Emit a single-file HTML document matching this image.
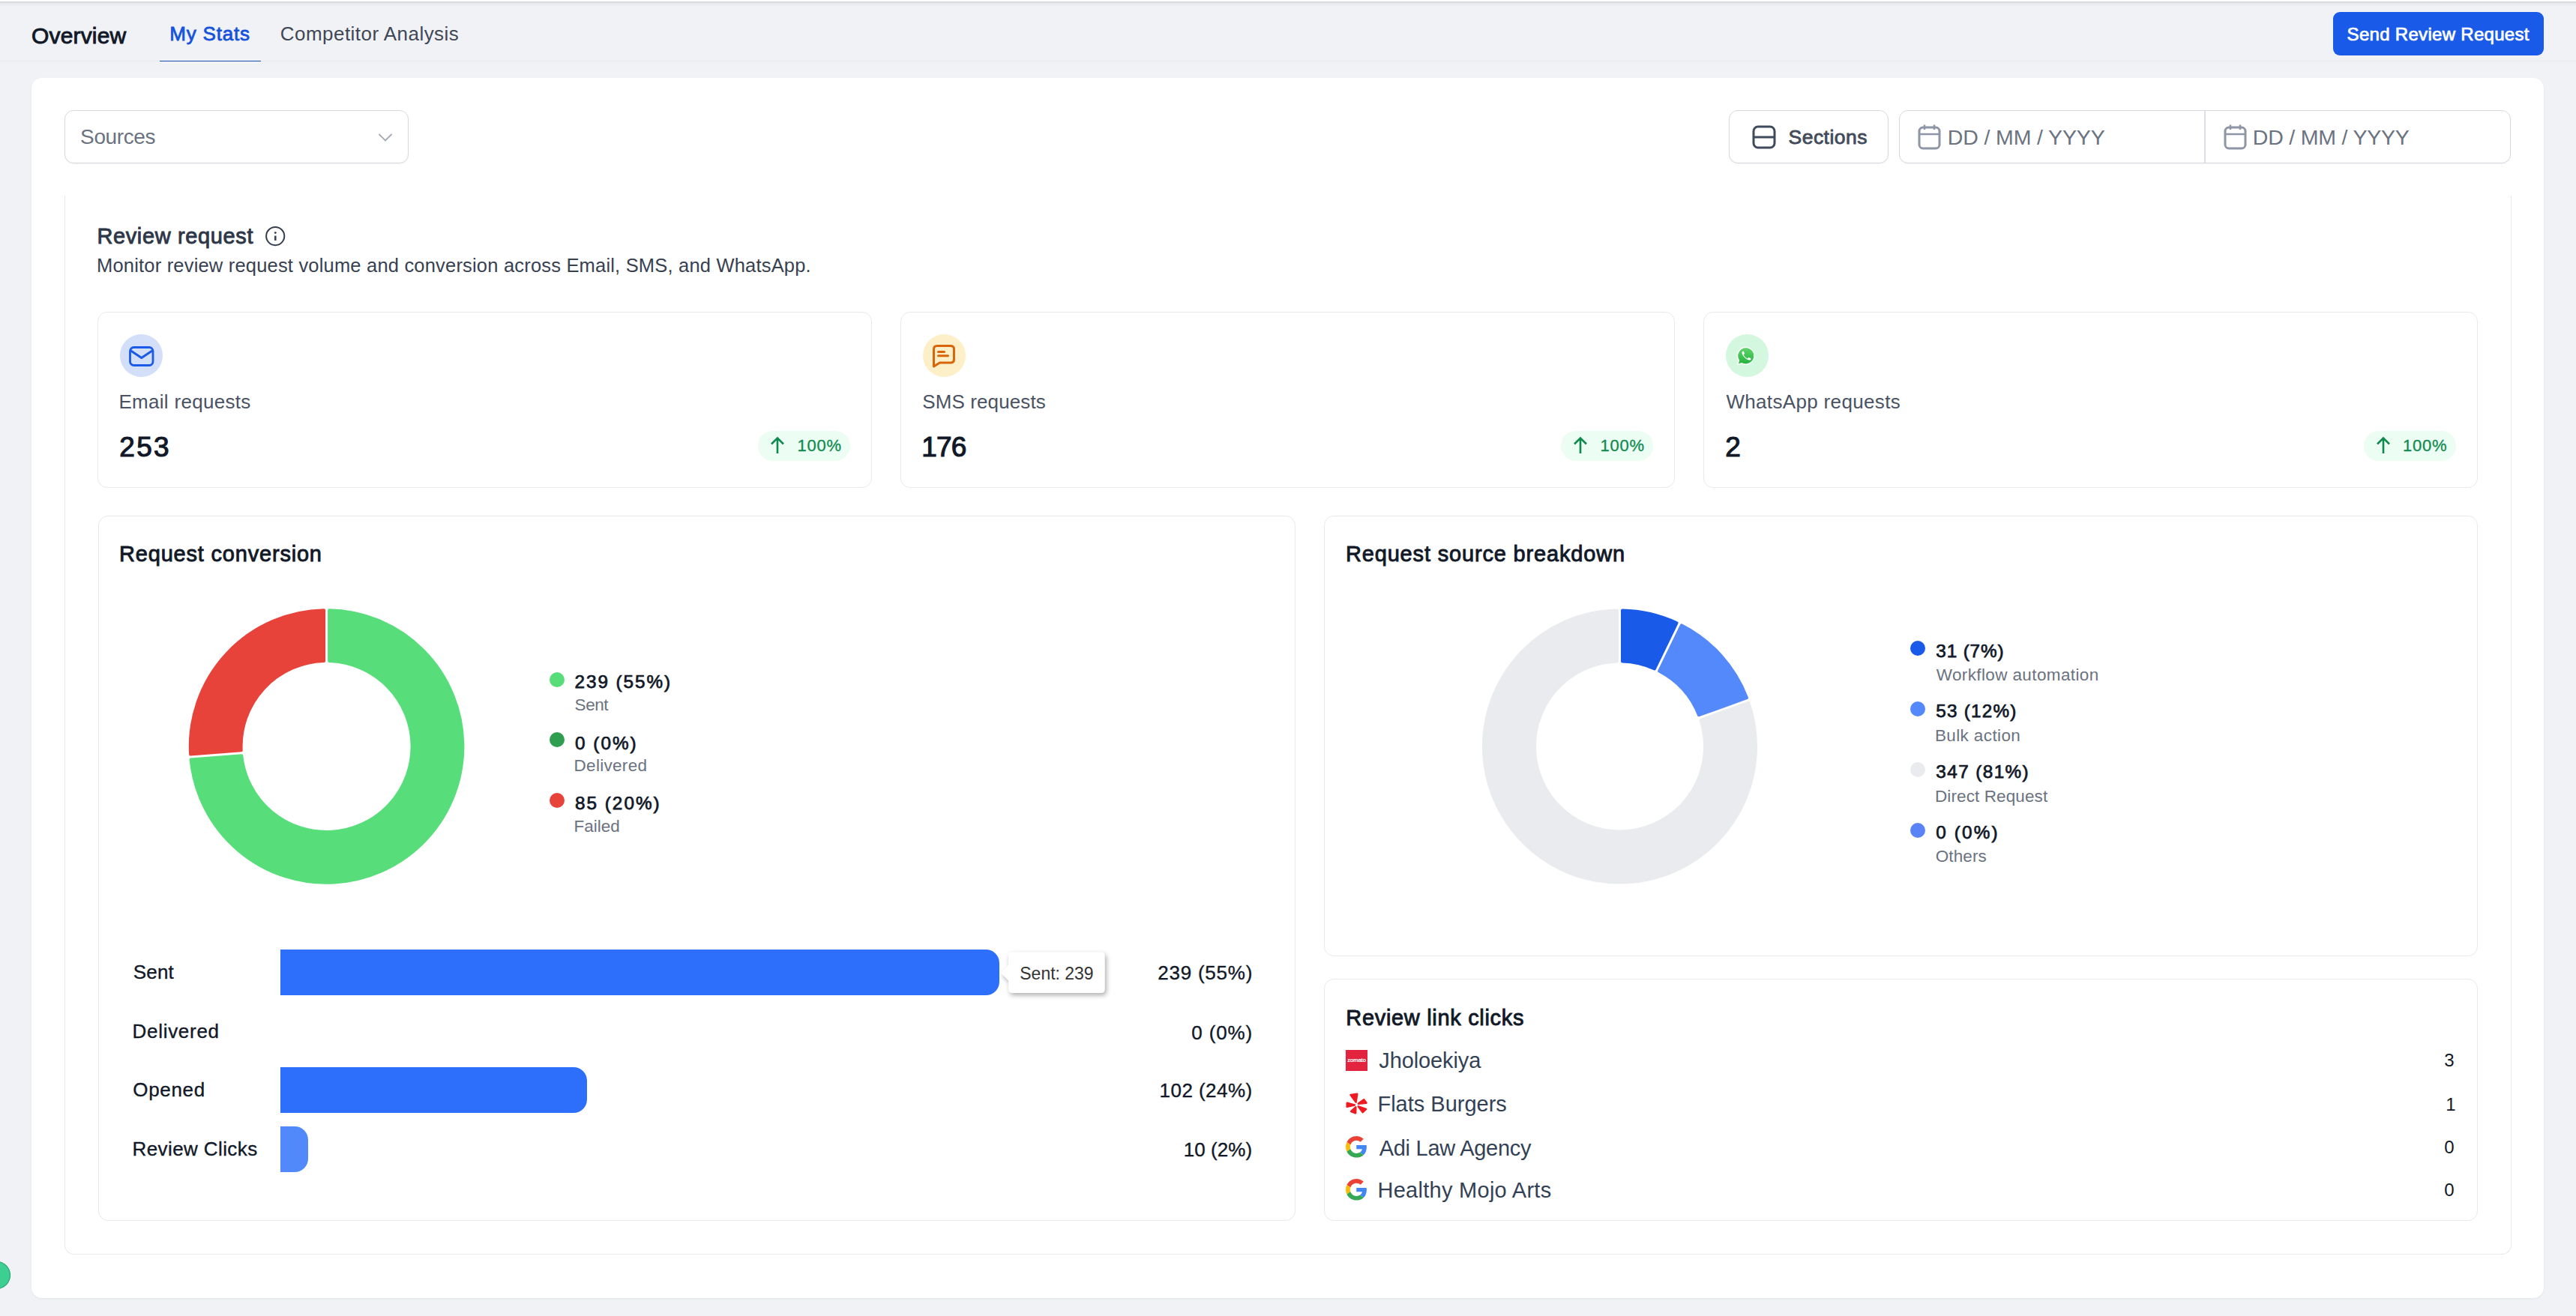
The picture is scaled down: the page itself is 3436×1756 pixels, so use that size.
<!DOCTYPE html><html><head><meta charset="utf-8"><title>Overview</title><style>
*{margin:0;padding:0;box-sizing:border-box}
html,body{width:3436px;height:1756px;overflow:hidden;background:#f0f2f5;font-family:"Liberation Sans",sans-serif}
.t{position:absolute;white-space:nowrap;line-height:1}
.ic{position:absolute;overflow:visible}
.topshadow{position:absolute;left:0;top:0;width:3436px;height:9px;background:linear-gradient(#fff 0,#fff 2px,#d6d8db 2.5px,#e9ebee 5px,#f0f2f5 9px)}
.hdrline{position:absolute;left:0;top:81px;width:3436px;height:1px;background:#e6e8ec}
.tabline{position:absolute;left:213px;top:80.6px;width:135px;height:1.6px;background:#1a4eb3}
.btn{position:absolute;left:3112px;top:16px;width:281px;height:57.5px;border-radius:9px;background:#1a5ae8}
.main{position:absolute;left:42px;top:103.5px;width:3351px;height:1628.5px;background:#fff;border-radius:14px;box-shadow:0 1px 3px rgba(0,0,0,.06)}
.box{position:absolute;background:#fff;border:1.5px solid #d6d9de;border-radius:12px;box-shadow:0 1px 2px rgba(16,24,40,.05)}
.inner{position:absolute;left:86px;top:261px;width:3263.5px;height:1412.5px;border:1.5px solid #e8e9eb;border-top:none;border-radius:0 0 13px 13px}
.card{position:absolute;background:#fff;border:1.5px solid #e8e9eb;border-radius:13px}
.circ{position:absolute;border-radius:50%}
.badge{position:absolute;border-radius:20px;background:#ecfdf3}
.bar{position:absolute;border-radius:0 18px 18px 0}
.tip{position:absolute;background:#fff;border-radius:5px;box-shadow:1px 2px 5px rgba(0,0,0,.35)}
.zom{position:absolute;background:#e2243f;color:#fff;font-weight:700;font-size:7.6px;line-height:28px;text-align:center;letter-spacing:-0.35px}
</style></head><body>
<div class="topshadow"></div>
<div class="hdrline"></div>
<div class="tabline"></div>
<div class="btn"></div>
<div class="main"></div>
<div class="box" style="left:86px;top:147px;width:459px;height:71px"></div>
<svg class="ic" style="left:503px;top:176.5px" width="22" height="14" viewBox="0 0 22 14"><path d="M2.5 2 L11 10.5 L19.5 2" fill="none" stroke="#a3a9b3" stroke-width="1.8"/></svg>
<div class="box" style="left:2306px;top:147px;width:213px;height:71px"></div>
<svg class="ic" style="left:2336px;top:166px" width="34" height="34" viewBox="0 0 34 34"><rect x="3" y="3" width="28" height="28" rx="6" fill="none" stroke="#3f4a5c" stroke-width="3"/><line x1="3" y1="17" x2="31" y2="17" stroke="#3f4a5c" stroke-width="3"/></svg>
<div class="box" style="left:2533px;top:147px;width:816px;height:71px"></div>
<div style="position:absolute;left:2940px;top:148px;width:1.5px;height:69px;background:#dcdfe4"></div>
<svg class="ic" style="left:2557px;top:165px" width="34" height="36" viewBox="0 0 34 36"><rect x="3" y="5" width="27" height="28" rx="5" fill="none" stroke="#8e95a5" stroke-width="3"/><line x1="3" y1="14" x2="30" y2="14" stroke="#8e95a5" stroke-width="2.5"/><line x1="10" y1="1.5" x2="10" y2="8" stroke="#8e95a5" stroke-width="2.5"/><line x1="23" y1="1.5" x2="23" y2="8" stroke="#8e95a5" stroke-width="2.5"/></svg>
<svg class="ic" style="left:2965px;top:165px" width="34" height="36" viewBox="0 0 34 36"><rect x="3" y="5" width="27" height="28" rx="5" fill="none" stroke="#8e95a5" stroke-width="3"/><line x1="3" y1="14" x2="30" y2="14" stroke="#8e95a5" stroke-width="2.5"/><line x1="10" y1="1.5" x2="10" y2="8" stroke="#8e95a5" stroke-width="2.5"/><line x1="23" y1="1.5" x2="23" y2="8" stroke="#8e95a5" stroke-width="2.5"/></svg>
<div class="inner"></div>
<svg class="ic" style="left:352px;top:300px" width="30" height="30" viewBox="0 0 30 30"><circle cx="15.2" cy="15.1" r="12.1" fill="none" stroke="#343e4f" stroke-width="2"/><line x1="15.3" y1="14.6" x2="15.3" y2="20.9" stroke="#343e4f" stroke-width="2.5"/><circle cx="15.3" cy="10.6" r="1.45" fill="#343e4f"/></svg>
<div class="card" style="left:130px;top:416px;width:1033px;height:235px"></div>
<div class="circ" style="left:160px;top:446px;width:57px;height:57px;background:#d3def9"></div>
<div class="badge" style="left:1011px;top:575px;width:123px;height:40px"></div>
<svg class="ic" style="left:1027px;top:582px" width="20" height="24" viewBox="0 0 20 24"><path d="M10 23 V3 M2 10.5 L10 2.5 L18 10.5" fill="none" stroke="#0f8a4f" stroke-width="2.6"/></svg>
<div class="card" style="left:1201px;top:416px;width:1033px;height:235px"></div>
<div class="circ" style="left:1231px;top:446px;width:57px;height:57px;background:#fdf0c8"></div>
<div class="badge" style="left:2082px;top:575px;width:123px;height:40px"></div>
<svg class="ic" style="left:2098px;top:582px" width="20" height="24" viewBox="0 0 20 24"><path d="M10 23 V3 M2 10.5 L10 2.5 L18 10.5" fill="none" stroke="#0f8a4f" stroke-width="2.6"/></svg>
<div class="card" style="left:2271.5px;top:416px;width:1033px;height:235px"></div>
<div class="circ" style="left:2301.5px;top:446px;width:57px;height:57px;background:#d3f7df"></div>
<div class="badge" style="left:3152.5px;top:575px;width:123px;height:40px"></div>
<svg class="ic" style="left:3168.5px;top:582px" width="20" height="24" viewBox="0 0 20 24"><path d="M10 23 V3 M2 10.5 L10 2.5 L18 10.5" fill="none" stroke="#0f8a4f" stroke-width="2.6"/></svg>
<svg class="ic" style="left:170.5px;top:460.5px" width="36" height="29" viewBox="0 0 36 29"><rect x="2.5" y="2.5" width="30.5" height="24" rx="5" fill="none" stroke="#1b5ae6" stroke-width="2.8"/><path d="M3.5 7 L17.75 16.5 L32 7" fill="none" stroke="#1b5ae6" stroke-width="3" stroke-linejoin="round"/></svg>
<svg class="ic" style="left:1242px;top:458px" width="34" height="35" viewBox="0 0 34 35"><path d="M3.5 31 V8 Q3.5 3.5 8 3.5 H26 Q30.5 3.5 30.5 8 V21.5 Q30.5 26 26 26 H11.5 Z" fill="none" stroke="#d9650b" stroke-width="3" stroke-linejoin="round"/><line x1="9.5" y1="11.5" x2="17.5" y2="11.5" stroke="#d9650b" stroke-width="3" stroke-linecap="round"/><line x1="9.5" y1="16.8" x2="22.5" y2="16.8" stroke="#d9650b" stroke-width="3" stroke-linecap="round"/></svg>
<svg class="ic" style="left:2315px;top:461px" width="28" height="28" viewBox="0 0 28 28"><defs><linearGradient id="wg" x1="0" y1="1" x2="0" y2="0"><stop offset="0" stop-color="#25b33f"/><stop offset="1" stop-color="#5fd46a"/></linearGradient></defs><path d="M14 1.8 A12 12 0 1 1 8 24.6 L1.8 26.3 L3.6 20.3 A12 12 0 0 1 14 1.8 Z" fill="#fff"/><path d="M14 3.2 A10.6 10.6 0 1 1 8.4 23 L3.9 24.2 L5.2 19.8 A10.6 10.6 0 0 1 14 3.2 Z" fill="url(#wg)"/><path d="M10.2 7.6 C9.6 7.6 8.6 8.3 8.5 9.6 C8.4 11.6 10.3 14.6 12.5 16.6 C14.7 18.6 17.2 19.8 18.8 19.6 C19.9 19.5 20.6 18.5 20.6 17.9 C20.6 17.5 20.4 17.3 20.1 17.1 L17.8 16 C17.4 15.8 17.1 15.9 16.9 16.2 L16.1 17.2 C15.9 17.4 15.6 17.5 15.3 17.3 C14.3 16.8 13.4 16.1 12.6 15.3 C11.8 14.5 11.2 13.6 10.8 12.7 C10.7 12.4 10.8 12.1 11 11.9 L11.8 11 C12 10.8 12.1 10.4 11.9 10.1 L10.9 7.9 C10.8 7.7 10.5 7.6 10.2 7.6 Z" fill="#fff"/></svg>
<div class="card" style="left:130.5px;top:688.4px;width:1597.5px;height:941px"></div>
<div class="card" style="left:1766px;top:688.2px;width:1538.5px;height:587.8px"></div>
<div class="card" style="left:1766px;top:1306.3px;width:1538.5px;height:322.7px"></div>
<svg class="ic" style="left:0;top:0" width="3436" height="1756" viewBox="0 0 3436 1756"><path d="M439.1 814.23 A181.8 181.8 0 1 1 254.65 1013.57 L322.27 1008.32 A114 114 0 1 0 439.1 882.05 Z" fill="#57dd7a" stroke="#57dd7a" stroke-width="4" stroke-linejoin="round"/><path d="M254.11 1006.6 A181.8 181.8 0 0 1 432.1 814.23 L432.1 882.05 A114 114 0 0 0 321.73 1001.34 Z" fill="#e8433a" stroke="#e8433a" stroke-width="4" stroke-linejoin="round"/><path d="M2164 814.53 A181.5 181.5 0 0 1 2236.6 831.22 L2206.89 892.41 A113.5 113.5 0 0 0 2164 882.55 Z" fill="#1a5ae8" stroke="#1a5ae8" stroke-width="4" stroke-linejoin="round"/><path d="M2242.89 834.28 A181.5 181.5 0 0 1 2330.01 931.13 L2266.03 954.21 A113.5 113.5 0 0 0 2213.19 895.47 Z" fill="#5489fb" stroke="#5489fb" stroke-width="4" stroke-linejoin="round"/><path d="M2332.39 937.71 A181.5 181.5 0 1 1 2157 814.53 L2157 882.55 A113.5 113.5 0 1 0 2268.4 960.79 Z" fill="#e9ebee" stroke="#e9ebee" stroke-width="4" stroke-linejoin="round"/></svg>
<div class="circ" style="left:733px;top:896.5px;width:20px;height:20px;background:#57dd7a"></div>
<div class="circ" style="left:733px;top:977px;width:20px;height:20px;background:#2f9e4f"></div>
<div class="circ" style="left:733px;top:1058px;width:20px;height:20px;background:#e8433a"></div>
<div class="circ" style="left:2548px;top:855px;width:20px;height:20px;background:#1a5ae8"></div>
<div class="circ" style="left:2548px;top:935.8px;width:20px;height:20px;background:#5489fb"></div>
<div class="circ" style="left:2548px;top:1016.9px;width:20px;height:20px;background:#e9ebee"></div>
<div class="circ" style="left:2548px;top:1097.9px;width:20px;height:20px;background:#5a84f5"></div>
<div class="bar" style="left:374.2px;top:1267px;width:959px;height:61px;background:#2d6ffb"></div>
<div class="bar" style="left:374.2px;top:1424px;width:409px;height:61px;background:#2d6ffb"></div>
<div class="bar" style="left:374.2px;top:1502.5px;width:37px;height:61px;background:#5189fb"></div>
<svg class="ic" style="left:1330px;top:1265px;filter:drop-shadow(2px 3px 3px rgba(0,0,0,.32))" width="150" height="66" viewBox="0 0 150 66"><path d="M20.1 5.6 H138.8 Q143.8 5.6 143.8 10.6 V55 Q143.8 60 138.8 60 H20.1 Q15.1 60 15.1 55 V43.5 L4.9 33 L15.1 22.7 V10.6 Q15.1 5.6 20.1 5.6 Z" fill="#fff"/></svg>
<div class="zom" style="left:1795px;top:1401px;width:29px;height:28px"><span>zomato</span></div>
<svg class="ic" style="left:1795px;top:1457px" width="30" height="31" viewBox="0 0 30 31"><g fill="#ef1b22" stroke="#ef1b22" stroke-width="2.6" stroke-linejoin="round"><path d="M6.6 4 L15.2 2.9 L13.6 13.6 Z"/><path d="M16.9 15.6 L24.3 10.4 L27.4 14.6 Z"/><path d="M16.9 19.4 L27 23 L22.6 27 Z"/><path d="M13.3 20.5 L13.1 28.3 L7.2 26 Z"/><path d="M11.8 17.4 L1.9 14.8 L1.7 19.8 Z"/></g></svg>
<svg class="ic" style="left:1795.2px;top:1516px" width="28.5" height="28.7" viewBox="0 0 48 48"><path fill="#EA4335" d="M24 9.5c3.54 0 6.71 1.22 9.21 3.6l6.85-6.85C35.9 2.38 30.47 0 24 0 14.62 0 6.51 5.38 2.56 13.22l7.98 6.19C12.43 13.72 17.74 9.5 24 9.5z"/><path fill="#4285F4" d="M46.98 24.55c0-1.57-.15-3.09-.38-4.55H24v9.02h12.94c-.58 2.96-2.26 5.48-4.78 7.18l7.730 6c4.51-4.18 7.09-10.36 7.09-17.650z"/><path fill="#FBBC05" d="M10.53 28.59c-.48-1.45-.76-2.99-.76-4.59s.27-3.14.76-4.59l-7.98-6.19C.92 16.46 0 20.12 0 24c0 3.88.92 7.54 2.56 10.78l7.97-6.19z"/><path fill="#34A853" d="M24 48c6.48 0 11.930-2.13 15.89-5.81l-7.73-6c-2.15 1.45-4.92 2.3-8.16 2.3-6.26 0-11.57-4.22-13.47-9.91l-7.98 6.19C6.51 42.62 14.62 48 24 48z"/></svg>
<svg class="ic" style="left:1795.2px;top:1572.8px" width="28.5" height="28.7" viewBox="0 0 48 48"><path fill="#EA4335" d="M24 9.5c3.54 0 6.71 1.22 9.21 3.6l6.85-6.85C35.9 2.38 30.47 0 24 0 14.62 0 6.51 5.38 2.56 13.22l7.98 6.19C12.43 13.72 17.74 9.5 24 9.5z"/><path fill="#4285F4" d="M46.98 24.55c0-1.57-.15-3.09-.38-4.55H24v9.02h12.94c-.58 2.96-2.26 5.48-4.78 7.18l7.730 6c4.51-4.18 7.09-10.36 7.09-17.650z"/><path fill="#FBBC05" d="M10.53 28.59c-.48-1.45-.76-2.99-.76-4.59s.27-3.14.76-4.59l-7.98-6.19C.92 16.46 0 20.12 0 24c0 3.88.92 7.54 2.56 10.78l7.97-6.19z"/><path fill="#34A853" d="M24 48c6.48 0 11.930-2.13 15.89-5.81l-7.73-6c-2.15 1.45-4.92 2.3-8.16 2.3-6.26 0-11.57-4.22-13.47-9.91l-7.98 6.19C6.51 42.62 14.62 48 24 48z"/></svg>
<div class="circ" style="left:-23px;top:1683px;width:37px;height:37px;background:#3ccf91;box-shadow:inset 0 0 0 1px #2f9f72"></div>
<div class="t" id="overview" style="left:42.06px;top:33.29px;font-size:30px;color:#111827;-webkit-text-stroke:0.92px #111827;letter-spacing:0.16px">Overview</div>
<div class="t" id="mystats" style="left:226.37px;top:31.98px;font-size:26px;color:#1552dd;-webkit-text-stroke:0.8px #1552dd;letter-spacing:0.77px">My Stats</div>
<div class="t" id="comp" style="left:373.78px;top:31.98px;font-size:26px;color:#3f4756;letter-spacing:0.46px">Competitor Analysis</div>
<div class="t" id="send" style="left:3130.62px;top:33.67px;font-size:24px;color:#ffffff;-webkit-text-stroke:0.74px #ffffff;letter-spacing:0.3px">Send Review Request</div>
<div class="t" id="sources" style="left:107.12px;top:168.78px;font-size:28px;color:#6b7280;letter-spacing:-0.38px">Sources</div>
<div class="t" id="sections" style="left:2385.58px;top:169.55px;font-size:26.5px;color:#414b5a;-webkit-text-stroke:0.82px #414b5a;letter-spacing:0.46px">Sections</div>
<div class="t" id="date1" style="left:2597.77px;top:168.66px;font-size:28.5px;color:#6b7280;letter-spacing:-0.13px">DD / MM / YYYY</div>
<div class="t" id="date2" style="left:3004.77px;top:168.66px;font-size:28.5px;color:#6b7280;letter-spacing:-0.2px">DD / MM / YYYY</div>
<div class="t" id="rrtitle" style="left:129.38px;top:301.44px;font-size:29px;color:#2d3748;-webkit-text-stroke:0.89px #2d3748;letter-spacing:0.63px">Review request</div>
<div class="t" id="desc" style="left:129.01px;top:342.2px;font-size:25.5px;color:#374151;letter-spacing:0.19px">Monitor review request volume and conversion across Email, SMS, and WhatsApp.</div>
<div class="t" id="lab1" style="left:158.47px;top:523.18px;font-size:26px;color:#4a5263;letter-spacing:0.29px">Email requests</div>
<div class="t" id="lab2" style="left:1230.29px;top:523.18px;font-size:26px;color:#4a5263;letter-spacing:0.11px">SMS requests</div>
<div class="t" id="lab3" style="left:2302.4px;top:523.18px;font-size:26px;color:#4a5263;letter-spacing:0.34px">WhatsApp requests</div>
<div class="t" id="num1" style="left:159.33px;top:577.66px;font-size:37px;color:#111827;-webkit-text-stroke:1.14px #111827;letter-spacing:2.28px">253</div>
<div class="t" id="num2" style="left:1229.36px;top:577.66px;font-size:37px;color:#111827;-webkit-text-stroke:1.14px #111827;letter-spacing:-0.88px">176</div>
<div class="t" id="num3" style="left:2301.23px;top:577.66px;font-size:37px;color:#111827;-webkit-text-stroke:1.14px #111827">2</div>
<div class="t" id="convtitle" style="left:159.08px;top:725.44px;font-size:29px;color:#111827;-webkit-text-stroke:0.89px #111827;letter-spacing:0.8px">Request conversion</div>
<div class="t" id="lv1" style="left:766.53px;top:898.22px;font-size:24.3px;color:#111827;-webkit-text-stroke:0.75px #111827;letter-spacing:1.94px">239 (55%)</div>
<div class="t" id="lv2" style="left:766.91px;top:979.72px;font-size:24.3px;color:#111827;-webkit-text-stroke:0.75px #111827;letter-spacing:2.04px">0 (0%)</div>
<div class="t" id="lv3" style="left:766.91px;top:1060.32px;font-size:24.3px;color:#111827;-webkit-text-stroke:0.75px #111827;letter-spacing:2.02px">85 (20%)</div>
<div class="t" id="ll1" style="left:766.6px;top:929.94px;font-size:22.5px;color:#6b7280;letter-spacing:-0.42px">Sent</div>
<div class="t" id="ll2" style="left:765.54px;top:1010.94px;font-size:22.5px;color:#6b7280;letter-spacing:0.3px">Delivered</div>
<div class="t" id="ll3" style="left:765.54px;top:1091.84px;font-size:22.5px;color:#6b7280;letter-spacing:-0.01px">Failed</div>
<div class="t" id="bl1" style="left:177.76px;top:1283.88px;font-size:26px;color:#111827;-webkit-text-stroke:0.35px #111827;letter-spacing:0.2px">Sent</div>
<div class="t" id="bl2" style="left:176.54px;top:1362.68px;font-size:26px;color:#111827;-webkit-text-stroke:0.35px #111827;letter-spacing:0.71px">Delivered</div>
<div class="t" id="bl3" style="left:177.36px;top:1441.48px;font-size:26px;color:#111827;-webkit-text-stroke:0.35px #111827;letter-spacing:0.66px">Opened</div>
<div class="t" id="bl4" style="left:176.54px;top:1520.18px;font-size:26px;color:#111827;-webkit-text-stroke:0.35px #111827;letter-spacing:0.4px">Review Clicks</div>
<div class="t" id="bv1" style="left:1544.16px;top:1284.98px;font-size:26px;color:#111827;-webkit-text-stroke:0.35px #111827;letter-spacing:0.79px">239 (55%)</div>
<div class="t" id="bv2" style="left:1589.26px;top:1364.68px;font-size:26px;color:#111827;-webkit-text-stroke:0.35px #111827;letter-spacing:0.87px">0 (0%)</div>
<div class="t" id="bv3" style="left:1546.55px;top:1441.98px;font-size:26px;color:#111827;-webkit-text-stroke:0.35px #111827;letter-spacing:0.46px">102 (24%)</div>
<div class="t" id="bv4" style="left:1578.65px;top:1520.98px;font-size:26px;color:#111827;-webkit-text-stroke:0.35px #111827;letter-spacing:0.08px">10 (2%)</div>
<div class="t" id="tip" style="left:1360.28px;top:1287.52px;font-size:23px;color:#333333;letter-spacing:-0.01px">Sent: 239</div>
<div class="t" id="srctitle" style="left:1794.98px;top:725.24px;font-size:29px;color:#111827;-webkit-text-stroke:0.89px #111827;letter-spacing:0.83px">Request source breakdown</div>
<div class="t" id="sv1" style="left:2582.31px;top:856.52px;font-size:24.3px;color:#111827;-webkit-text-stroke:0.75px #111827;letter-spacing:0.86px">31 (7%)</div>
<div class="t" id="sv2" style="left:2582.31px;top:936.82px;font-size:24.3px;color:#111827;-webkit-text-stroke:0.75px #111827;letter-spacing:1.21px">53 (12%)</div>
<div class="t" id="sv3" style="left:2582.31px;top:1018.02px;font-size:24.3px;color:#111827;-webkit-text-stroke:0.75px #111827;letter-spacing:1.41px">347 (81%)</div>
<div class="t" id="sv4" style="left:2582.31px;top:1099.12px;font-size:24.3px;color:#111827;-webkit-text-stroke:0.75px #111827;letter-spacing:2.14px">0 (0%)</div>
<div class="t" id="sl1" style="left:2582.7px;top:890.14px;font-size:22.5px;color:#6b7280;letter-spacing:0.38px">Workflow automation</div>
<div class="t" id="sl2" style="left:2580.94px;top:970.94px;font-size:22.5px;color:#6b7280;letter-spacing:0.38px">Bulk action</div>
<div class="t" id="sl3" style="left:2580.94px;top:1051.94px;font-size:22.5px;color:#6b7280;letter-spacing:0.11px">Direct Request</div>
<div class="t" id="sl4" style="left:2581.65px;top:1132.24px;font-size:22.5px;color:#6b7280;letter-spacing:0.13px">Others</div>
<div class="t" id="lctitle" style="left:1795.28px;top:1343.74px;font-size:29px;color:#111827;-webkit-text-stroke:0.89px #111827;letter-spacing:0.68px">Review link clicks</div>
<div class="t" id="n1" style="left:1839.25px;top:1401.24px;font-size:29px;color:#334155;letter-spacing:-0.11px">Jholoekiya</div>
<div class="t" id="n2" style="left:1837.43px;top:1459.34px;font-size:29px;color:#334155">Flats Burgers</div>
<div class="t" id="n3" style="left:1839.7px;top:1517.74px;font-size:29px;color:#334155;letter-spacing:-0.27px">Adi Law Agency</div>
<div class="t" id="n4" style="left:1837.43px;top:1573.74px;font-size:29px;color:#334155;letter-spacing:0.28px">Healthy Mojo Arts</div>
<div class="t" id="c1" style="left:3260.25px;top:1403.27px;font-size:24px;color:#111827">3</div>
<div class="t" id="c2" style="left:3262.3px;top:1462.07px;font-size:24px;color:#111827">1</div>
<div class="t" id="c3" style="left:3260.25px;top:1518.67px;font-size:24px;color:#111827">0</div>
<div class="t" id="c4" style="left:3260.25px;top:1575.67px;font-size:24px;color:#111827">0</div>
<div class="t" id="pct1" style="left:1063.47px;top:584.37px;font-size:22px;color:#0f8a4f;-webkit-text-stroke:0.3px #0f8a4f;letter-spacing:0.76px">100%</div>
<div class="t" id="pct2" style="left:2134.47px;top:584.37px;font-size:22px;color:#0f8a4f;-webkit-text-stroke:0.3px #0f8a4f;letter-spacing:0.76px">100%</div>
<div class="t" id="pct3" style="left:3204.97px;top:584.37px;font-size:22px;color:#0f8a4f;-webkit-text-stroke:0.3px #0f8a4f;letter-spacing:0.76px">100%</div>
</body></html>
